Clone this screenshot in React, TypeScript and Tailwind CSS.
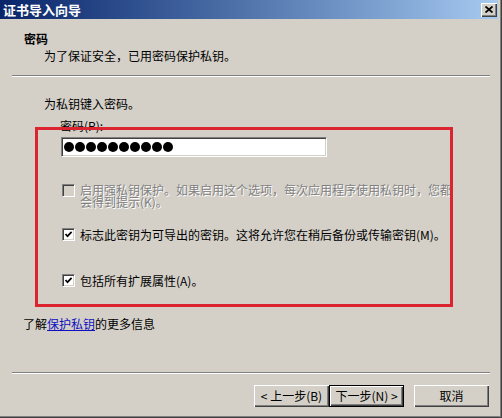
import React from "react";

function CheckBox({ checked, disabled }: { checked?: boolean; disabled?: boolean }) {
	return (
		<div className="w-[13px] h-[13px] shrink-0 border border-t-[#808080] border-l-[#808080] border-b-white border-r-white">
			<div
				className={`w-full h-full flex items-center justify-center shadow-[inset_1px_1px_0_#404040,inset_-1px_-1px_0_#d4d0c8] ${
					disabled ? "bg-[#d4d0c8]" : "bg-white"
				}`}>
				{checked && (
					<svg width="9" height="9" viewBox="0 0 9 9">
						<path d="M1.5 4 L3.5 6.2 L7.6 1.8" fill="none" stroke="#000" strokeWidth="1.7" />
					</svg>
				)}
			</div>
		</div>
	);
}

function Button({ children, isDefault }: { children: React.ReactNode; isDefault?: boolean }) {
	return (
		<div className={`w-[75px] h-[22px] ${isDefault ? "border border-black" : ""}`}>
			<div className="w-full h-full flex items-center justify-center text-[12px] leading-[12px] text-black bg-[#d4d0c8] shadow-[inset_1px_1px_0_#fff,inset_-1px_-1px_0_#404040,inset_-2px_-2px_0_#808080]">
				{children}
			</div>
		</div>
	);
}

function Separator() {
	return <div className="ml-[12px] w-[478px] h-[2px] border-t border-t-[#808080] border-b border-b-white" />;
}

export default function App() {
	return (
		<div className="relative w-[502px] h-[418px] overflow-hidden bg-[#d4d0c8] pr-[4px] pb-[2px] font-['Noto_Sans_CJK_SC',sans-serif] text-black shadow-[inset_-1px_-1px_0_#404040,inset_-2px_-2px_0_#808080]">
			{/* Title bar */}
			<div className="h-[19px] flex items-center justify-between pl-[3px] pr-[1px] bg-gradient-to-r from-[#0a246a] to-[#a6caf0]">
				<span className="text-white font-bold text-[13px] leading-[13px]">证书导入向导</span>
				<div className="w-[16px] h-[14px] flex items-center justify-center bg-[#d4d0c8] shadow-[inset_1px_1px_0_#fff,inset_-1px_-1px_0_#404040,inset_-2px_-2px_0_#808080]">
					<svg width="8" height="7" viewBox="0 0 8 7">
						<path d="M0.5 0.5 L7.5 6.5 M7.5 0.5 L0.5 6.5" stroke="#000" strokeWidth="1.8" />
					</svg>
				</div>
			</div>

			{/* Header */}
			<div className="mt-[13px] pl-[24px] text-[12px] leading-[14px] font-bold">密码</div>
			<div className="mt-[3px] pl-[44px] text-[12px] leading-[14px]">为了保证安全，已用密码保护私钥。</div>
			<div className="mt-[12px]">
				<Separator />
			</div>

			{/* Body */}
			<div className="mt-[20px] pl-[44px] text-[12px] leading-[14px]">为私钥键入密码。</div>
			<div className="mt-[8px] pl-[60px] text-[12px] leading-[14px]">密码(P):</div>
			<div className="mt-[4px] ml-[61px] w-[266px] h-[20px] border border-t-[#808080] border-l-[#808080] border-b-white border-r-white">
				<div className="w-full h-full bg-white flex items-center gap-[1px] pl-[2px] shadow-[inset_1px_1px_0_#404040,inset_-1px_-1px_0_#d4d0c8]">
					{Array.from({ length: 10 }).map((_, i) => (
						<span key={i} className="w-[10px] h-[10px] rounded-full bg-black" />
					))}
				</div>
			</div>

			<div className="mt-[27px] pl-[62px] flex gap-[5px]">
				<CheckBox disabled />
				<div className="text-[12px] leading-[12px] whitespace-nowrap text-[#808080] [text-shadow:1px_1px_0_#fff]">
					启用强私钥保护。如果启用这个选项，每次应用程序使用私钥时，您都
					<br />
					会得到提示(K)。
				</div>
			</div>

			<div className="mt-[20px] pl-[62px] flex items-center gap-[5px]">
				<CheckBox checked />
				<span className="text-[12px] leading-[13px] whitespace-nowrap">标志此密钥为可导出的密钥。这将允许您在稍后备份或传输密钥(M)。</span>
			</div>

			<div className="mt-[33px] pl-[62px] flex items-center gap-[5px]">
				<CheckBox checked />
				<span className="text-[12px] leading-[13px] whitespace-nowrap">包括所有扩展属性(A)。</span>
			</div>

			<div className="mt-[30px] pl-[23px] text-[12px] leading-[14px]">
				了解<span className="text-[#1010c0] underline">保护私钥</span>的更多信息
			</div>

			<div className="mt-[41px]">
				<Separator />
			</div>

			{/* Buttons */}
			<div className="mt-[11px] pl-[254px] flex">
				<Button>&lt; 上一步(B)</Button>
				<Button isDefault>下一步(N) &gt;</Button>
				<div className="ml-[10px]">
					<Button>取消</Button>
				</div>
			</div>

			{/* Red annotation box */}
			<div className="absolute left-[35px] top-[127px] w-[418px] h-[180px] border-[3px] border-[#dc2430] pointer-events-none" />
		</div>
	);
}
